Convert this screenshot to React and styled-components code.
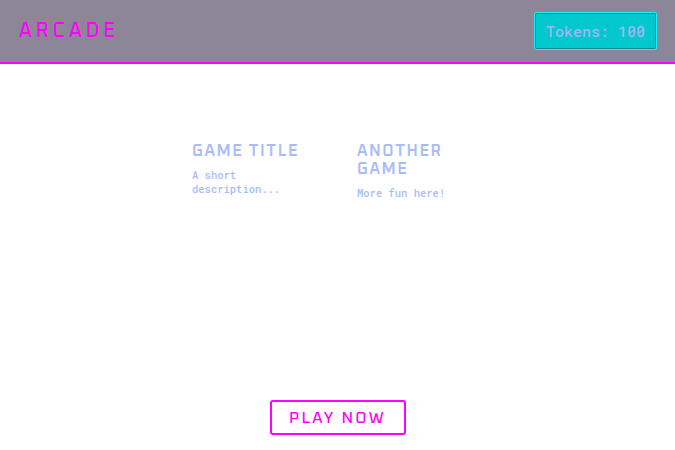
import React from "react";
import styled, { createGlobalStyle } from "styled-components";

const Global = createGlobalStyle`
  html, body { margin: 0; padding: 0; background: #ffffff; }
  body { font-family: "DejaVu Sans", sans-serif; }
  * { box-sizing: border-box; }
`;

const display = `"Oxanium", "DejaVu Sans", sans-serif`;
const mono = `"Roboto Mono", "DejaVu Sans Mono", monospace`;

const Header = styled.header`
  height: 64px;
  background: #8c8698;
  border-bottom: 2px solid #ff00ff;
  display: flex;
  align-items: center;
  justify-content: space-between;
  padding: 0 18px 0 19px;
`;

const Logo = styled.h1`
  margin: 0;
  font-family: ${display};
  font-size: 20px;
  font-weight: 500;
  letter-spacing: 4px;
  color: #ff00ff;
  line-height: 1;
`;

const Tokens = styled.button`
  height: 38px;
  padding: 0 11px;
  background: #00c8cc;
  border: 1px solid #20eef6;
  box-shadow: inset 0 0 0 1px #178a90;
  border-radius: 2px;
  font-family: ${mono};
  font-size: 15px;
  font-weight: 500;
  color: #a4b4f4;
  cursor: pointer;
`;

const Main = styled.main`
  display: flex;
  flex-direction: column;
  align-items: center;
  padding-top: 66px;
`;

const Grid = styled.div`
  display: flex;
  gap: 15px;
  height: 270px;
  align-items: flex-start;
`;

const Card = styled.article`
  width: 150px;
  padding: 12px;
`;

const CardTitle = styled.h2`
  margin: 0 0 8px;
  font-family: ${display};
  font-size: 16px;
  font-weight: 600;
  line-height: 18px;
  letter-spacing: 1.6px;
  color: #a8bcfa;
`;

const CardText = styled.p`
  margin: 0;
  font-family: ${mono};
  font-size: 10.5px;
  font-weight: 500;
  line-height: 14px;
  color: #a8bcfa;
`;

const Play = styled.button`
  width: 136px;
  height: 35px;
  background: #ffffff;
  border: 2px solid #ff00ff;
  border-radius: 3px;
  font-family: ${display};
  font-size: 16px;
  font-weight: 500;
  letter-spacing: 2.2px;
  color: #ff00ff;
  cursor: pointer;
`;

const games = [
  { title: "Game Title", text: "A short description..." },
  { title: "Another Game", text: "More fun here!" },
];

export default function App() {
  return (
    <>
      <Global />
      <Header>
        <Logo>ARCADE</Logo>
        <Tokens>Tokens: 100</Tokens>
      </Header>
      <Main>
        <Grid>
          {games.map((g) => (
            <Card key={g.title}>
              <CardTitle>{g.title.toUpperCase()}</CardTitle>
              <CardText>{g.text}</CardText>
            </Card>
          ))}
        </Grid>
        <Play>PLAY NOW</Play>
      </Main>
    </>
  );
}
